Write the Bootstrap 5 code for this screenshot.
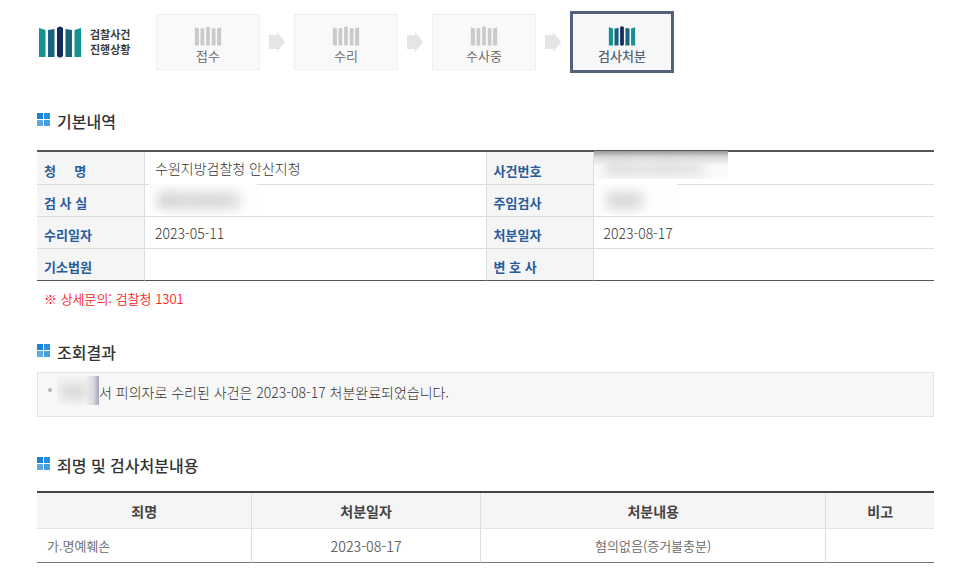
<!DOCTYPE html>
<html lang="ko">
<head>
<meta charset="utf-8">
<meta name="viewport" content="width=device-width, initial-scale=1">
<title>검찰사건 진행상황</title>
<link rel="stylesheet" href="https://cdn.jsdelivr.net/npm/bootstrap@5.3.0/dist/css/bootstrap.min.css">
<style>
  body { font-family: "Noto Sans CJK KR", sans-serif; font-size: 14px; line-height: 24px; color: #444; background: #fff; }
  .page { padding: 11px 32px 16px 37px; }
  .brand { width: 119px; padding-left: 2px; gap: 9px; }
  .brand-name { font-size: 11px; line-height: 15px; font-weight: 700; color: #3c3c3c; }
  .brand-name span { display: block; }
  .steps { gap: 9px; }
  .step { width: 104px; height: 56px; padding-top: 11px; background: #f9f9f9; border: 1px solid #eee; font-size: 13px; line-height: 20px; color: #6b605e; font-weight: 350; }
  .step.current { height: 62px; padding-top: 12px; border: 3px solid #52627c; background: #f7f7f7; color: #52627c; font-weight: 500; }
  .step-mark { width: 28px; height: 20px; }
  .section-title { font-size: 16px; line-height: 24px; font-weight: 500; color: #333; gap: 7px; }
  .section-title svg { margin-bottom: 3px; }
  .info, .result { width: 100%; border-collapse: separate; border-spacing: 0; table-layout: fixed; border-top: 2px solid #555; }
  .info { margin-top: 17px; }
  .info th, .info td { height: 32px; border-bottom: 1px solid #dadde4; }
  .info tr:first-child > * { height: 33px; }
  .info th { background: #f5f5f5; border-right: 1px solid #dadde4; padding: 5px 0 0 7px; font-size: 13px; line-height: 24px; font-weight: 700; color: #285b9c; }
  .info td { padding: 0 10px; font-weight: 300; color: #333; line-height: 24px; }
  .info td + th { border-left: 1px solid #dadde4; }
  .info tr:last-child > * { border-bottom-color: #555; }
  .w-label { width: 108px; }
  .masked { position: relative; }
  .mask { position: absolute; overflow: hidden; background: #fefefe; }
  .mask::after { content: ""; position: absolute; left: 9px; top: 8px; bottom: 6px; background: linear-gradient(90deg, #d0d0d0, #dadada 40%, #d4d4d4 60%, #dedede); filter: blur(6px); }
  .mask-room { left: 4px; top: -1px; width: 108px; height: 31px; }
  .mask-room::after { width: 82px; }
  .mask-number { left: 0; top: -1px; width: 134px; height: 28px; background: linear-gradient(#999 0, #d8d8d8 6px, #fafafa 15px); }
  .mask-number::after { left: 12px; top: 13px; bottom: 5px; width: 98px; }
  .mask-person { left: 1px; top: -1px; width: 82px; height: 31px; }
  .mask-person::after { left: 12px; width: 36px; }
  .notice { color: #f22; font-size: 13px; font-weight: 350; padding: 6px 7px 0; }
  .summary { background: #f7f7f7; border: 1px solid #e4e4e4; padding: 7px 10px 12px; font-weight: 300; color: #333; }
  .dot { width: 4px; height: 4px; background: #b5b5b5; margin-bottom: 4px; }
  .summary-name { position: relative; width: 47px; height: 24px; }
  .mask-name { inset: -4px 0 -1px 5px; background: linear-gradient(90deg, #f5f5f5 0 28px, #dcdce2 36px, #a4a6b8); }
  .mask-name::after { left: 5px; width: 26px; }
  .result { margin-top: 14px; border-top-color: #444; }
  .result th, .result td { border-right: 1px solid #dadde4; border-bottom: 1px solid #e1e5eb; text-align: center; }
  .result tr > :last-child { border-right: 0; }
  .result th { height: 36px; font-weight: 700; color: #444; background: #f5f5f5; }
  .result td { height: 34px; border-bottom: 1px solid #777; font-size: 13px; font-weight: 350; color: #666; }
  .result td:first-child { text-align: left; padding-left: 10px; }
  .result td.date { font-size: 14px; }
  .sec-one { padding-top: 36px; }
  .sec-two { padding-top: 29px; }
  .sec-three { padding-top: 36px; }
</style>
<script src="https://cdn.jsdelivr.net/npm/bootstrap@5.3.0/dist/js/bootstrap.bundle.min.js"></script>
</head>
<body>
<svg class="d-none" aria-hidden="true">
  <symbol id="pillars" viewBox="0 0 42 32">
    <path d="M0 2L6.500 4V31H0zM42 2L35.500 4V31H42z"/>
    <path d="M9 4L15 3V31H9zM33 4L27 3V31H33z"/>
    <path d="M18 2Q21-1 24 2V30Q21 33 18 30z"/>
  </symbol>
  <symbol id="pillars-color" viewBox="0 0 42 32">
    <path fill="#13928f" d="M0 2L6.500 4V31H0zM42 2L35.500 4V31H42z"/>
    <path fill="#17637f" d="M9 4L15.500 3V31H9zM33 4L26.500 3V31H33z"/>
    <path fill="#122a5c" d="M18 2Q21-1 24 2V30Q21 33 18 30z"/>
  </symbol>
  <symbol id="arrow" viewBox="0 0 16 20"><path fill="#e5e5e5" d="M0 3H8V0L16 10L8 20V17H0z"/></symbol>
  <symbol id="tiles" viewBox="0 0 13 13">
    <path fill="#1683d6" d="M0 0H6V6H0z"/><path fill="#2790dc" d="M7 0H13V6H7z"/>
    <path fill="#5baae5" d="M0 7H6V13H0z"/><path fill="#439fe0" d="M7 7H13V13H7z"/>
  </symbol>
</svg>
<main class="page">
  <header class="d-flex align-items-center">
    <div class="brand d-flex align-items-center flex-shrink-0">
      <svg width="42" height="32" aria-hidden="true"><use href="#pillars-color"/></svg>
      <div class="brand-name"><span>검찰사건</span><span>진행상황</span></div>
    </div>
    <div class="steps d-flex align-items-center">
      <div class="step d-flex flex-column align-items-center"><svg class="step-mark flex-shrink-0" fill="#cacaca"><use href="#pillars"/></svg><span>접수</span></div>
      <svg width="16" height="20" aria-hidden="true"><use href="#arrow"/></svg>
      <div class="step d-flex flex-column align-items-center"><svg class="step-mark flex-shrink-0" fill="#cacaca"><use href="#pillars"/></svg><span>수리</span></div>
      <svg width="16" height="20" aria-hidden="true"><use href="#arrow"/></svg>
      <div class="step d-flex flex-column align-items-center"><svg class="step-mark flex-shrink-0" fill="#cacaca"><use href="#pillars"/></svg><span>수사중</span></div>
      <svg width="16" height="20" aria-hidden="true"><use href="#arrow"/></svg>
      <div class="step current d-flex flex-column align-items-center" aria-current="step"><svg class="step-mark flex-shrink-0"><use href="#pillars-color"/></svg><span>검사처분</span></div>
    </div>
  </header>

  <section class="sec-one">
    <h2 class="section-title d-flex align-items-center mb-0"><svg width="13" height="13" aria-hidden="true"><use href="#tiles"/></svg>기본내역</h2>
    <table class="info">
      <colgroup><col class="w-label"><col><col class="w-label"><col></colgroup>
      <tbody>
        <tr><th scope="row">청&nbsp;&nbsp;&nbsp;&nbsp;&nbsp;명</th><td>수원지방검찰청 안산지청</td><th scope="row">사건번호</th><td class="masked"><span class="mask mask-number"></span></td></tr>
        <tr><th scope="row">검 사 실</th><td class="masked"><span class="mask mask-room"></span></td><th scope="row">주임검사</th><td class="masked"><span class="mask mask-person"></span></td></tr>
        <tr><th scope="row">수리일자</th><td>2023-05-11</td><th scope="row">처분일자</th><td>2023-08-17</td></tr>
        <tr><th scope="row">기소법원</th><td></td><th scope="row">변 호 사</th><td></td></tr>
      </tbody>
    </table>
    <p class="notice mb-0">※ 상세문의: 검찰청 1301</p>
  </section>

  <section class="sec-two">
    <h2 class="section-title d-flex align-items-center mb-0"><svg width="13" height="13" aria-hidden="true"><use href="#tiles"/></svg>조회결과</h2>
    <div class="summary d-flex align-items-center mt-2">
      <span class="dot rounded-circle flex-shrink-0"></span>
      <span class="summary-name flex-shrink-0"><span class="mask mask-name"></span></span>
      <span>서 피의자로 수리된 사건은 2023-08-17 처분완료되었습니다.</span>
    </div>
  </section>

  <section class="sec-three">
    <h2 class="section-title d-flex align-items-center mb-0"><svg width="13" height="13" aria-hidden="true"><use href="#tiles"/></svg>죄명 및 검사처분내용</h2>
    <table class="result">
      <colgroup><col style="width:24%"><col style="width:25.5%"><col style="width:38.5%"><col style="width:12%"></colgroup>
      <thead><tr><th scope="col">죄명</th><th scope="col">처분일자</th><th scope="col">처분내용</th><th scope="col">비고</th></tr></thead>
      <tbody><tr><td>가.명예훼손</td><td class="date">2023-08-17</td><td>혐의없음(증거불충분)</td><td></td></tr></tbody>
    </table>
  </section>
</main>
</body>
</html>
